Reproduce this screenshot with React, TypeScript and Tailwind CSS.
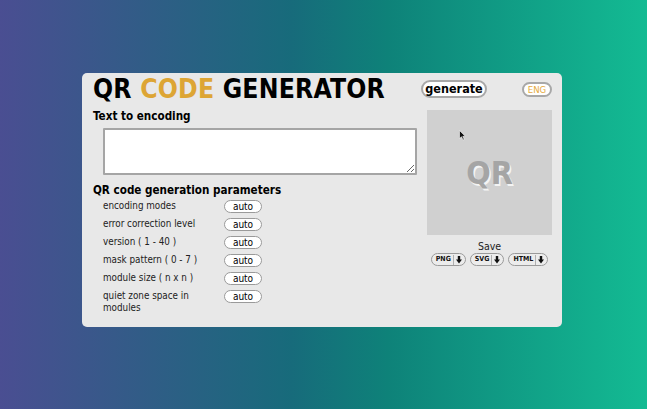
import React from 'react';

const params = [
  'encoding modes',
  'error correction level',
  'version ( 1 - 40 )',
  'mask pattern ( 0 - 7 )',
  'module size ( n x n )',
  'quiet zone space in modules',
];

const DownArrow = () => (
  <svg width="6" height="8" viewBox="0 0 6 8" className="block">
    <rect x="1.8" y="0" width="2.4" height="4" fill="#111" />
    <path d="M0 3.5 L6 3.5 L3 7.5 Z" fill="#111" />
  </svg>
);

const SaveButton: React.FC<{ label: string }> = ({ label }) => (
  <button className="flex items-center h-[13px] pl-[4px] pr-[3px] gap-[2px] rounded-full border-[1.5px] border-[#9a9a9a] bg-[#ececec] text-[7px] font-bold text-[#111] leading-none">
    <span>{label}</span>
    <span className="w-px h-[10px] bg-[#b0b0b0]" />
    <DownArrow />
  </button>
);

const App: React.FC = () => {
  return (
    <div className="w-[647px] h-[409px] pl-[82px] pt-[73px] bg-[linear-gradient(90deg,#4a4e92_0%,#176b7b_45%,#0e8279_60%,#13bb93_100%)] font-['DejaVu_Sans_Condensed','DejaVu_Sans',sans-serif]">
      <div className="w-[480px] h-[254px] bg-[#e8e8e8] rounded-[5px] pl-[11px] pr-[10px] flex flex-col">
        <div className="flex items-center h-[37px] pb-[5px]">
          <h1 className="text-[26.3px] leading-[28px] font-bold text-black tracking-[0.2px]">
            QR <span className="text-[#dda534]">CODE</span> GENERATOR
          </h1>
          <button className="ml-auto h-[18px] w-[66px] rounded-full border-2 border-[#a8a8a8] bg-white text-[12.5px] font-bold text-black leading-none">
            generate
          </button>
          <button className="ml-[35px] mt-[1px] h-[15px] w-[30px] rounded-full border-2 border-[#a8a8a8] bg-white text-[9.5px] text-[#e5aa40] leading-none">
            ENG
          </button>
        </div>
        <div className="flex">
          <div className="flex-1">
            <h2 className="text-[11.6px] font-bold text-black leading-[14px] mt-[-1px]">Text to encoding</h2>
            <textarea className="block mt-[5px] ml-[10px] w-[314px] h-[47px] bg-white border-2 border-[#a5a5a5] resize-y rounded-[1px]" />
            <h2 className="text-[11.6px] font-bold text-black leading-[14px] mt-[8px]">QR code generation parameters</h2>
            <div className="mt-[3px] ml-[10px] flex flex-col">
              {params.map((p) => (
                <div key={p} className="flex items-start min-h-[18px]">
                  <span className="w-[121px] text-[9.8px] leading-[12px] text-[#222] pr-[10px]">{p}</span>
                  <button className="h-[13px] w-[38px] rounded-full border-[1.5px] border-[#9a9a9a] bg-white text-[10px] text-black leading-none">
                    auto
                  </button>
                </div>
              ))}
            </div>
          </div>
          <div className="w-[125px] flex flex-col items-center">
            <div className="relative w-[125px] h-[125px] bg-[#d0d0d0] flex items-center justify-center">
              <span className="text-[32px] font-bold text-[#a5a5a5] [text-shadow:1.5px_1.5px_0_#f4f4f4]">QR</span>
              <svg className="absolute left-[32px] top-[20px]" width="7" height="11" viewBox="0 0 7 11">
                <path d="M0.5 0.5 L0.5 8.5 L2.5 6.8 L4 10 L5.2 9.4 L3.8 6.3 L6.3 6.2 Z" fill="#111" stroke="#fff" strokeWidth="0.6" />
              </svg>
            </div>
            <div className="text-[10.5px] text-[#222] leading-[12px] mt-[5px]">Save</div>
            <div className="flex gap-[4px] mt-[1px]">
              <SaveButton label="PNG" />
              <SaveButton label="SVG" />
              <SaveButton label="HTML" />
            </div>
          </div>
        </div>
      </div>
    </div>
  );
};

export default App;
